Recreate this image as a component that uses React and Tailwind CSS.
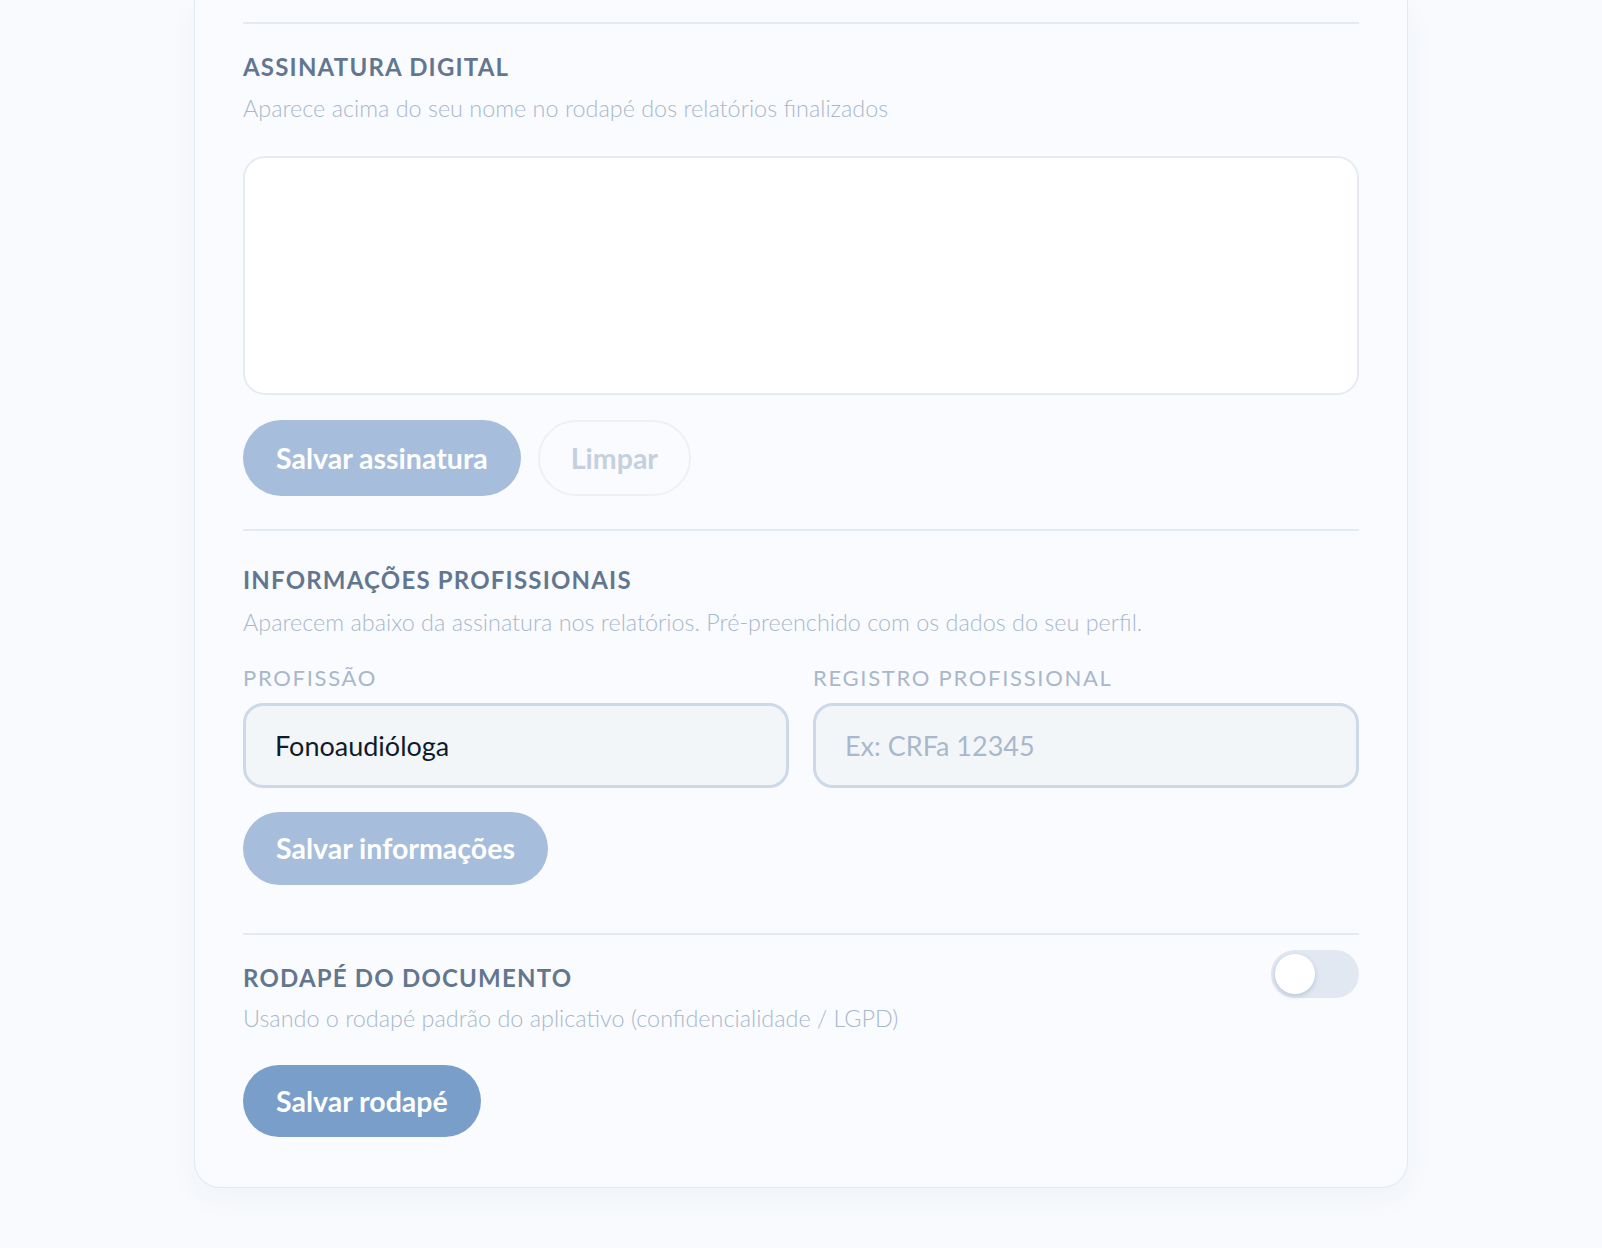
import React, { useState } from "react";

function Divider({ className = "" }) {
  return <div className={"h-[2px] bg-[#e4eaf2] " + className} />;
}

function Heading({ children, className = "" }) {
  return (
    <h2
      className={
        "text-[24px] leading-[32px] font-bold tracking-[1.2px] text-[#62778f] uppercase " +
        className
      }
    >
      {children}
    </h2>
  );
}

function Sub({ children, className = "" }) {
  return (
    <p className={"text-[23.4px] leading-[32px] font-light text-[#a8b8cb] " + className}>
      {children}
    </p>
  );
}

function Label({ children }) {
  return (
    <div className="text-[22px] leading-[24px] font-normal tracking-[1.7px] text-[#a8b7ca] uppercase">
      {children}
    </div>
  );
}

function Field({ value, placeholder }) {
  return (
    <input
      readOnly
      defaultValue={value}
      placeholder={placeholder}
      className="mt-[13px] block w-full h-[85px] rounded-[20px] border-[3px] border-[#cdd9e8] bg-[#f3f6f9] px-[29px] text-[27px] text-[#0f1b2d] placeholder:text-[#a9b8ca] outline-none"
    />
  );
}

export default function App() {
  const [on, setOn] = useState(false);
  return (
    <div className="min-h-screen bg-[#f8fafd] font-['Lato',sans-serif] pb-[61px]">
      <div className="mx-auto w-[1214px] rounded-b-[26px] border-x border-b border-[#e3e9f1] bg-[#fafbfe] px-[48px] pb-[50px] shadow-[0_10px_30px_rgba(40,70,120,0.04)]">
        <div className="pt-[22px]">
          <Divider />
        </div>

        {/* Assinatura digital */}
        <Heading className="mt-[27px]">Assinatura digital</Heading>
        <Sub className="mt-[9px]">
          Aparece acima do seu nome no rodapé dos relatórios finalizados
        </Sub>
        <div className="mt-[32px] h-[239px] rounded-[22px] border-2 border-[#e6ebf2] bg-white" />
        <div className="mt-[25px] flex gap-[17px]">
          <button className="h-[76px] rounded-full bg-[#a6bedb] px-[33px] text-[28.5px] font-bold text-white">
            Salvar assinatura
          </button>
          <button className="h-[76px] rounded-full border-2 border-[#edf1f6] px-[31px] text-[28.5px] font-bold text-[#c4d0dd]">
            Limpar
          </button>
        </div>

        <Divider className="mt-[33px]" />

        {/* Informações profissionais */}
        <Heading className="mt-[33px]">Informações profissionais</Heading>
        <Sub className="mt-[10px]">
          Aparecem abaixo da assinatura nos relatórios. Pré-preenchido com os dados do seu perfil.
        </Sub>
        <div className="mt-[28px] grid grid-cols-2 gap-x-[24px]">
          <div>
            <Label>Profissão</Label>
            <Field value="Fonoaudióloga" />
          </div>
          <div>
            <Label>Registro profissional</Label>
            <Field placeholder="Ex: CRFa 12345" />
          </div>
        </div>
        <button className="mt-[24px] h-[73px] rounded-full bg-[#a6bedb] px-[33px] text-[28.5px] font-bold text-white">
          Salvar informações
        </button>

        <Divider className="mt-[48px]" />

        {/* Rodapé do documento */}
        <div className="mt-[15px] flex items-start justify-between">
          <Heading className="mt-[12px]">Rodapé do documento</Heading>
          <button
            onClick={() => setOn(!on)}
            className={
              "relative h-[48px] w-[88px] rounded-full " +
              (on ? "bg-[#799ec9]" : "bg-[#e1e8f2]")
            }
          >
            <span
              className={
                "absolute top-[4px] h-[40px] w-[40px] rounded-full bg-white shadow-[0_2px_5px_rgba(60,90,140,0.25)] " +
                (on ? "left-[44px]" : "left-[4px]")
              }
            />
          </button>
        </div>
        <Sub className="mt-[4px]">
          Usando o rodapé padrão do aplicativo (confidencialidade / LGPD)
        </Sub>
        <button className="mt-[31px] h-[72px] rounded-full bg-[#799ec9] px-[33px] text-[28.5px] font-bold text-white">
          Salvar rodapé
        </button>
      </div>
    </div>
  );
}
